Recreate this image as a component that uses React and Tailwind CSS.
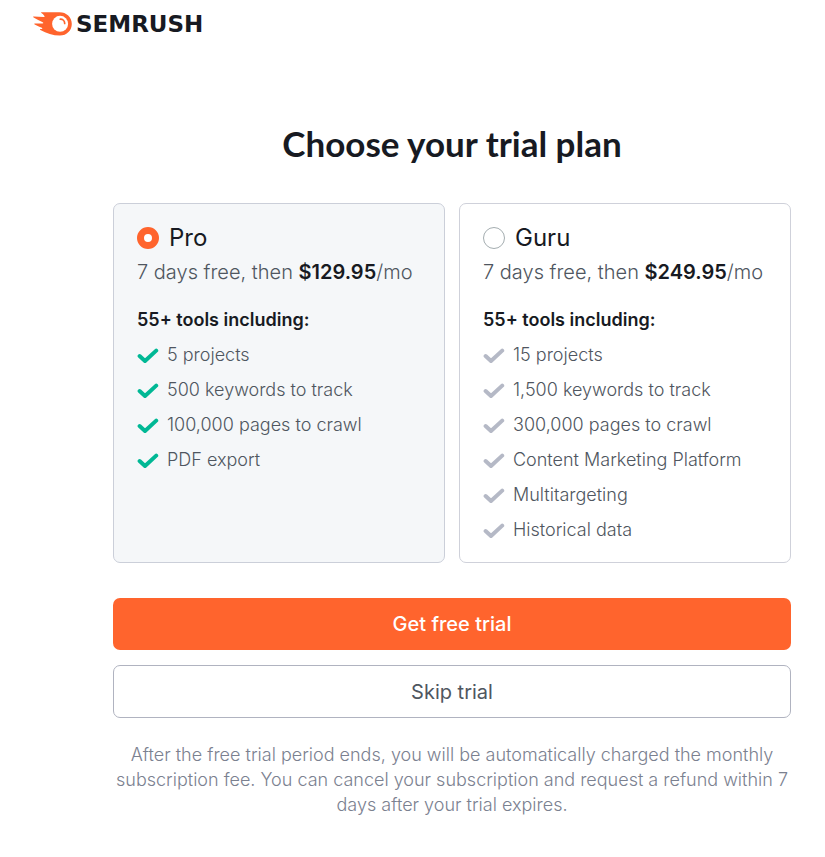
import { useState } from 'react';

const plans = [
  {
    id: 'pro',
    name: 'Pro',
    price: '$129.95',
    features: ['5 projects', '500 keywords to track', '100,000 pages to crawl', 'PDF export'],
  },
  {
    id: 'guru',
    name: 'Guru',
    price: '$249.95',
    features: [
      '15 projects',
      '1,500 keywords to track',
      '300,000 pages to crawl',
      'Content Marketing Platform',
      'Multitargeting',
      'Historical data',
    ],
  },
];

function Logo() {
  return (
    <a href="#" className="flex items-center gap-1 text-[#171a22]">
      <svg viewBox="0 0 39 24" className="h-6 w-[39px]" aria-hidden="true">
        <path
          fill="#ff642d"
          d="M8.6 0.2C8 0.2 7.9 0.7 8.4 1C9.6 1.8 10.6 2.8 11.4 4C11.8 4.7 11.4 5.1 10.6 5.1L0.8 4.5C0 4.5 -0.1 5 0.6 5.4C3.7 7.2 6.6 8.6 9.7 10.2C10.8 10.9 10.4 11.5 9.4 11.5L2 11.6C1.2 11.6 1.1 12.1 1.7 12.5C4 13.8 6.4 14.8 8.8 15.8C9.6 16.2 9.4 16.8 8.7 16.9L7.4 17C6.6 17.1 6.7 17.6 7.4 18C13.5 21.3 20 23.6 26.8 23.6C34 23.6 38.8 18.2 38.8 12C38.8 5 33.4 0.2 26.5 0.2Z"
        />
        <circle cx="27.1" cy="11.8" r="8" fill="#fff" />
        <path d="M27.3 7.2C29.8 7.2 31.7 9 31.7 11.5" fill="none" stroke="#ff642d" strokeWidth="1.7" strokeLinecap="round" />
      </svg>
      <span className="font-['DejaVu_Sans',sans-serif] text-[23px] leading-6 font-bold">SEMRUSH</span>
    </a>
  );
}

function Check({ active }) {
  return (
    <svg
      viewBox="0 0 22 16"
      className={active ? 'mt-[2px] h-4 w-[22px] text-[#00b895]' : 'mt-[2px] h-4 w-[22px] text-[#b5b9c6]'}
      fill="none"
      stroke="currentColor"
      strokeWidth="4"
      strokeLinecap="round"
      strokeLinejoin="round"
      aria-hidden="true"
    >
      <path d="M2.6 8L8 13L19.2 2.6" />
    </svg>
  );
}

function PlanCard({ plan, active, onSelect }) {
  return (
    <section
      className={
        active
          ? 'rounded-[7px] border border-[#cbcfd9] bg-[#f5f7f9] px-[23px] pt-4 pb-[15px]'
          : 'rounded-[7px] border border-[#cfd1da] bg-white px-[23px] pt-4 pb-[15px]'
      }
    >
      <label className="flex items-center gap-[10px] text-2xl leading-9 text-[#171a22]">
        <input
          type="radio"
          name="plan"
          value={plan.id}
          checked={active}
          onChange={onSelect}
          className="size-[22px] appearance-none rounded-full border border-[#a4adb0] bg-white checked:border-[7px] checked:border-[#ff642d]"
        />
        {plan.name}
      </label>
      <p className="text-xl leading-8 font-light text-[#4f5660]">
        7 days free, then <strong className="font-semibold text-[#171a22]">{plan.price}</strong>/mo
      </p>
      <h2 className="mt-5 text-lg leading-6 font-semibold text-[#171a22]">55+ tools including:</h2>
      <ul className="mt-[5px]">
        {plan.features.map((feature) => (
          <li key={feature} className="flex items-center gap-2 text-lg leading-[35px] font-light text-[#4f5660]">
            <Check active={active} />
            {feature}
          </li>
        ))}
      </ul>
    </section>
  );
}

export default function App() {
  const [selected, setSelected] = useState('pro');
  return (
    <div className="bg-white font-['Inter','Liberation_Sans',sans-serif]">
      <header className="flex px-[33px] pt-3">
        <Logo />
      </header>
      <main className="ml-[113px] mr-[34px] mt-[83px] max-w-3xl pb-10">
        <h1 className="text-center font-['Lato','Inter',sans-serif] text-[35px] leading-[48px] font-bold text-[#171a22]">
          Choose your trial plan
        </h1>
        <form onSubmit={(event) => event.preventDefault()}>
          <div className="mt-9 grid grid-cols-2 gap-[14px]">
            {plans.map((plan) => (
              <PlanCard
                key={plan.id}
                plan={plan}
                active={selected === plan.id}
                onSelect={() => setSelected(plan.id)}
              />
            ))}
          </div>
          <button type="submit" className="mt-[35px] block h-[52px] w-full rounded-[7px] bg-[#ff642d] text-xl font-medium text-white">
            Get free trial
          </button>
          <button type="button" className="mt-[15px] block h-[53px] w-full rounded-[7px] border border-[#b0b3c0] bg-white text-xl text-[#4f5660]">
            Skip trial
          </button>
        </form>
        <p className="mt-6 text-center text-lg leading-[25px] font-light text-[#7b8190]">
          After the free trial period ends, you will be automatically charged the monthly subscription fee. You can
          cancel your subscription and request a refund within 7 days after your trial expires.
        </p>
      </main>
    </div>
  );
}
